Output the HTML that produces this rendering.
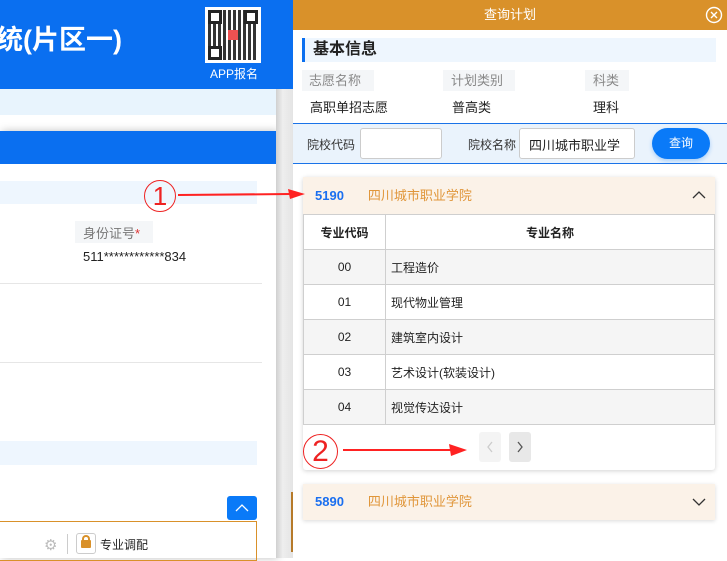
<!DOCTYPE html>
<html><head><meta charset="utf-8"><style>
*{margin:0;padding:0;box-sizing:border-box}
body{width:727px;height:558px;overflow:hidden;position:relative;background:#fff;font-family:"Liberation Sans","Noto Sans CJK SC",sans-serif;font-size:13px;color:#222}
.a{position:absolute}
td{border:1px solid #cfcfcf;height:35px;font-size:12px}
</style></head><body>
<div class="a" style="left:0;top:0;width:293px;height:89px;background:#0a6ff0"></div>
<div class="a" style="left:-4px;top:18px;color:#fff;font-weight:bold;font-size:27px;white-space:nowrap">统(片区一)</div>
<div class="a" style="left:205px;top:7px;width:56px;height:56px;background:#fff;padding:3px">
<div style="width:100%;height:100%;background:repeating-linear-gradient(90deg,#111 0 3px,#fff 3px 5px),#111;opacity:.85;position:relative">
<div class="a" style="left:0;top:0;width:14px;height:14px;border:3px solid #000;background:#fff"></div>
<div class="a" style="right:0;top:0;width:14px;height:14px;border:3px solid #000;background:#fff"></div>
<div class="a" style="left:0;bottom:0;width:14px;height:14px;border:3px solid #000;background:#fff"></div>
<div class="a" style="left:20px;top:20px;width:10px;height:10px;background:#e33"></div></div></div>
<div class="a" style="left:210px;top:65px;color:#fff;font-size:12px">APP报名</div>
<div class="a" style="left:0;top:89px;width:293px;height:26px;background:#e8f4fd"></div>
<div class="a" style="left:0;top:131px;width:276px;height:427px;background:#fff;box-shadow:2px 0 8px rgba(0,0,0,.25)"></div>
<div class="a" style="left:0;top:131px;width:276px;height:33px;background:#0a6ff0"></div>
<div class="a" style="left:0;top:181px;width:257px;height:23px;background:#eef6fe"></div>
<div class="a" style="left:75px;top:221px;width:78px;height:22px;background:#f4f6f8;color:#777;font-size:13px;padding:2px 0 0 8px">身份证号<span style="color:#d33">*</span></div>
<div class="a" style="left:83px;top:249px;font-size:13px">511************834</div>
<div class="a" style="left:0;top:283px;width:262px;height:1px;background:#e6e6e6"></div>
<div class="a" style="left:0;top:362px;width:262px;height:1px;background:#e6e6e6"></div>
<div class="a" style="left:0;top:441px;width:257px;height:24px;background:#eef6fe"></div>
<div class="a" style="left:227px;top:496px;width:30px;height:24px;background:#0a7af8;border-radius:3px"><svg width="30" height="24"><path d="M9 15 L15 9 L21 15" stroke="#fff" stroke-width="1.3" fill="none"/></svg></div>
<div class="a" style="left:-2px;top:521px;width:259px;height:40px;border:1px solid #d9912a"></div>
<div class="a" style="left:44px;top:536px;color:#bbb;font-size:15px">⚙</div>
<div class="a" style="left:67px;top:534px;width:1px;height:20px;background:#ccc"></div>
<div class="a" style="left:76px;top:533px;width:20px;height:21px;border:1px solid #ccc;border-radius:3px"></div>
<div class="a" style="left:81px;top:540px;width:10px;height:8px;background:#d9912a;border-radius:1px"></div>
<div class="a" style="left:82px;top:535px;width:8px;height:7px;border:2px solid #d9912a;border-bottom:none;border-radius:4px 4px 0 0"></div>
<div class="a" style="left:100px;top:536px;font-size:12px">专业调配</div>
<div class="a" style="left:276px;top:0;width:17px;height:558px;background:linear-gradient(90deg,#d0d0d0,#eee 40%,#e4e4e4)"></div>
<div class="a" style="left:276px;top:0;width:17px;height:89px;background:#0a6ff0"></div>
<div class="a" style="left:291px;top:492px;width:2px;height:60px;background:#b67a2a"></div>
<div class="a" style="left:293px;top:0;width:434px;height:558px;background:#fff"></div>
<div class="a" style="left:293px;top:0;width:434px;height:30px;background:#d9912a;color:#fff;text-align:center;line-height:30px;font-size:13px">查询计划</div>
<svg class="a" style="left:705px;top:6px" width="18" height="18"><circle cx="9" cy="9" r="7.5" stroke="#fff" stroke-width="1.4" fill="none"/><path d="M6 6 L12 12 M12 6 L6 12" stroke="#fff" stroke-width="1.4"/></svg>
<div class="a" style="left:302px;top:38px;width:414px;height:24px;background:#eef6fe;border-left:3px solid #0a6ff0;font-weight:bold;font-size:16px;padding-left:8px;line-height:24px">基本信息</div>
<div class="a" style="left:302px;top:70px;width:72px;height:21px;background:#f4f6f8;color:#888;padding-left:7px;line-height:21px">志愿名称</div>
<div class="a" style="left:443px;top:70px;width:72px;height:21px;background:#f4f6f8;color:#888;padding-left:8px;line-height:21px">计划类别</div>
<div class="a" style="left:585px;top:70px;width:44px;height:21px;background:#f4f6f8;color:#888;padding-left:8px;line-height:21px">科类</div>
<div class="a" style="left:310px;top:97px">高职单招志愿</div>
<div class="a" style="left:452px;top:97px">普高类</div>
<div class="a" style="left:593px;top:97px">理科</div>
<div class="a" style="left:293px;top:123px;width:434px;height:41px;background:#eaf3fc;border-top:1px solid #1a73e8;border-bottom:1px solid #1a73e8"></div>
<div class="a" style="left:307px;top:136px;font-size:12px;color:#333">院校代码</div>
<div class="a" style="left:360px;top:128px;width:82px;height:31px;background:#fff;border:1px solid #ccc;border-radius:3px"></div>
<div class="a" style="left:468px;top:136px;font-size:12px;color:#333">院校名称</div>
<div class="a" style="left:519px;top:128px;width:116px;height:31px;background:#fff;border:1px solid #ccc;border-radius:3px;padding:6px 0 0 9px;font-size:13px;overflow:hidden;white-space:nowrap">四川城市职业学</div>
<div class="a" style="left:652px;top:128px;width:58px;height:31px;background:#0a7af8;border-radius:16px;color:#fff;text-align:center;line-height:31px;font-size:12px;box-shadow:0 2px 4px rgba(10,122,248,.3)">查询</div>
<div class="a" style="left:303px;top:177px;width:412px;height:293px;background:#fff;box-shadow:0 1px 5px rgba(0,0,0,.18);border-radius:3px"></div>
<div class="a" style="left:303px;top:177px;width:412px;height:37px;background:#fbf2e8;line-height:37px;padding-left:12px"><b style="color:#1a6ff0">5190</b><span style="color:#e0963a;margin-left:24px">四川城市职业学院</span><svg class="a" style="right:8px;top:12px" width="16" height="12"><path d="M2 9 L8 3 L14 9" stroke="#333" stroke-width="1.3" fill="none"/></svg></div>
<table class="a" style="left:303px;top:214px;width:412px;border-collapse:collapse;text-align:left">
<tr style="height:34px"><td style="width:82px;text-align:center;font-weight:bold">专业代码</td><td style="text-align:center;font-weight:bold">专业名称</td></tr>
<tr style="background:#f5f5f5"><td style="text-align:center">00</td><td style="padding-left:5px">工程造价</td></tr>
<tr><td style="text-align:center">01</td><td style="padding-left:5px">现代物业管理</td></tr>
<tr style="background:#f5f5f5"><td style="text-align:center">02</td><td style="padding-left:5px">建筑室内设计</td></tr>
<tr><td style="text-align:center">03</td><td style="padding-left:5px">艺术设计(软装设计)</td></tr>
<tr style="background:#f5f5f5"><td style="text-align:center">04</td><td style="padding-left:5px">视觉传达设计</td></tr>
</table>
<div class="a" style="left:479px;top:432px;width:22px;height:30px;background:#f4f4f4;border-radius:3px"><svg width="22" height="30"><path d="M13 10 L9 15 L13 20" stroke="#ccc" stroke-width="1.3" fill="none"/></svg></div>
<div class="a" style="left:509px;top:432px;width:22px;height:30px;background:#e8e8e8;border-radius:3px"><svg width="22" height="30"><path d="M9 10 L13 15 L9 20" stroke="#555" stroke-width="1.3" fill="none"/></svg></div>
<div class="a" style="left:303px;top:484px;width:412px;height:36px;background:#fbf2e8;box-shadow:0 1px 4px rgba(0,0,0,.15);line-height:36px;padding-left:12px"><b style="color:#1a6ff0">5890</b><span style="color:#e0963a;margin-left:24px">四川城市职业学院</span><svg class="a" style="right:8px;top:12px" width="16" height="12"><path d="M2 3 L8 9 L14 3" stroke="#333" stroke-width="1.3" fill="none"/></svg></div>
<div class="a" style="left:144px;top:180px;width:32px;height:32px;border:1px solid #e22;border-radius:50%;color:#e22;font-size:26px;text-align:center;line-height:30px">1</div>
<svg class="a" style="left:178px;top:188px" width="128" height="14"><path d="M0 7 L112 6" stroke="#f22" stroke-width="2"/><path d="M127 6 L110 1 L112 11 Z" fill="#f22"/></svg>
<div class="a" style="left:303px;top:434px;width:35px;height:35px;border:1px solid #e22;border-radius:50%;color:#e22;font-size:30px;text-align:center;line-height:33px">2</div>
<svg class="a" style="left:343px;top:443px" width="125" height="14"><path d="M0 7 L110 7" stroke="#f22" stroke-width="2"/><path d="M124 7 L106 1 L108 13 Z" fill="#f22"/></svg>
</body></html>
